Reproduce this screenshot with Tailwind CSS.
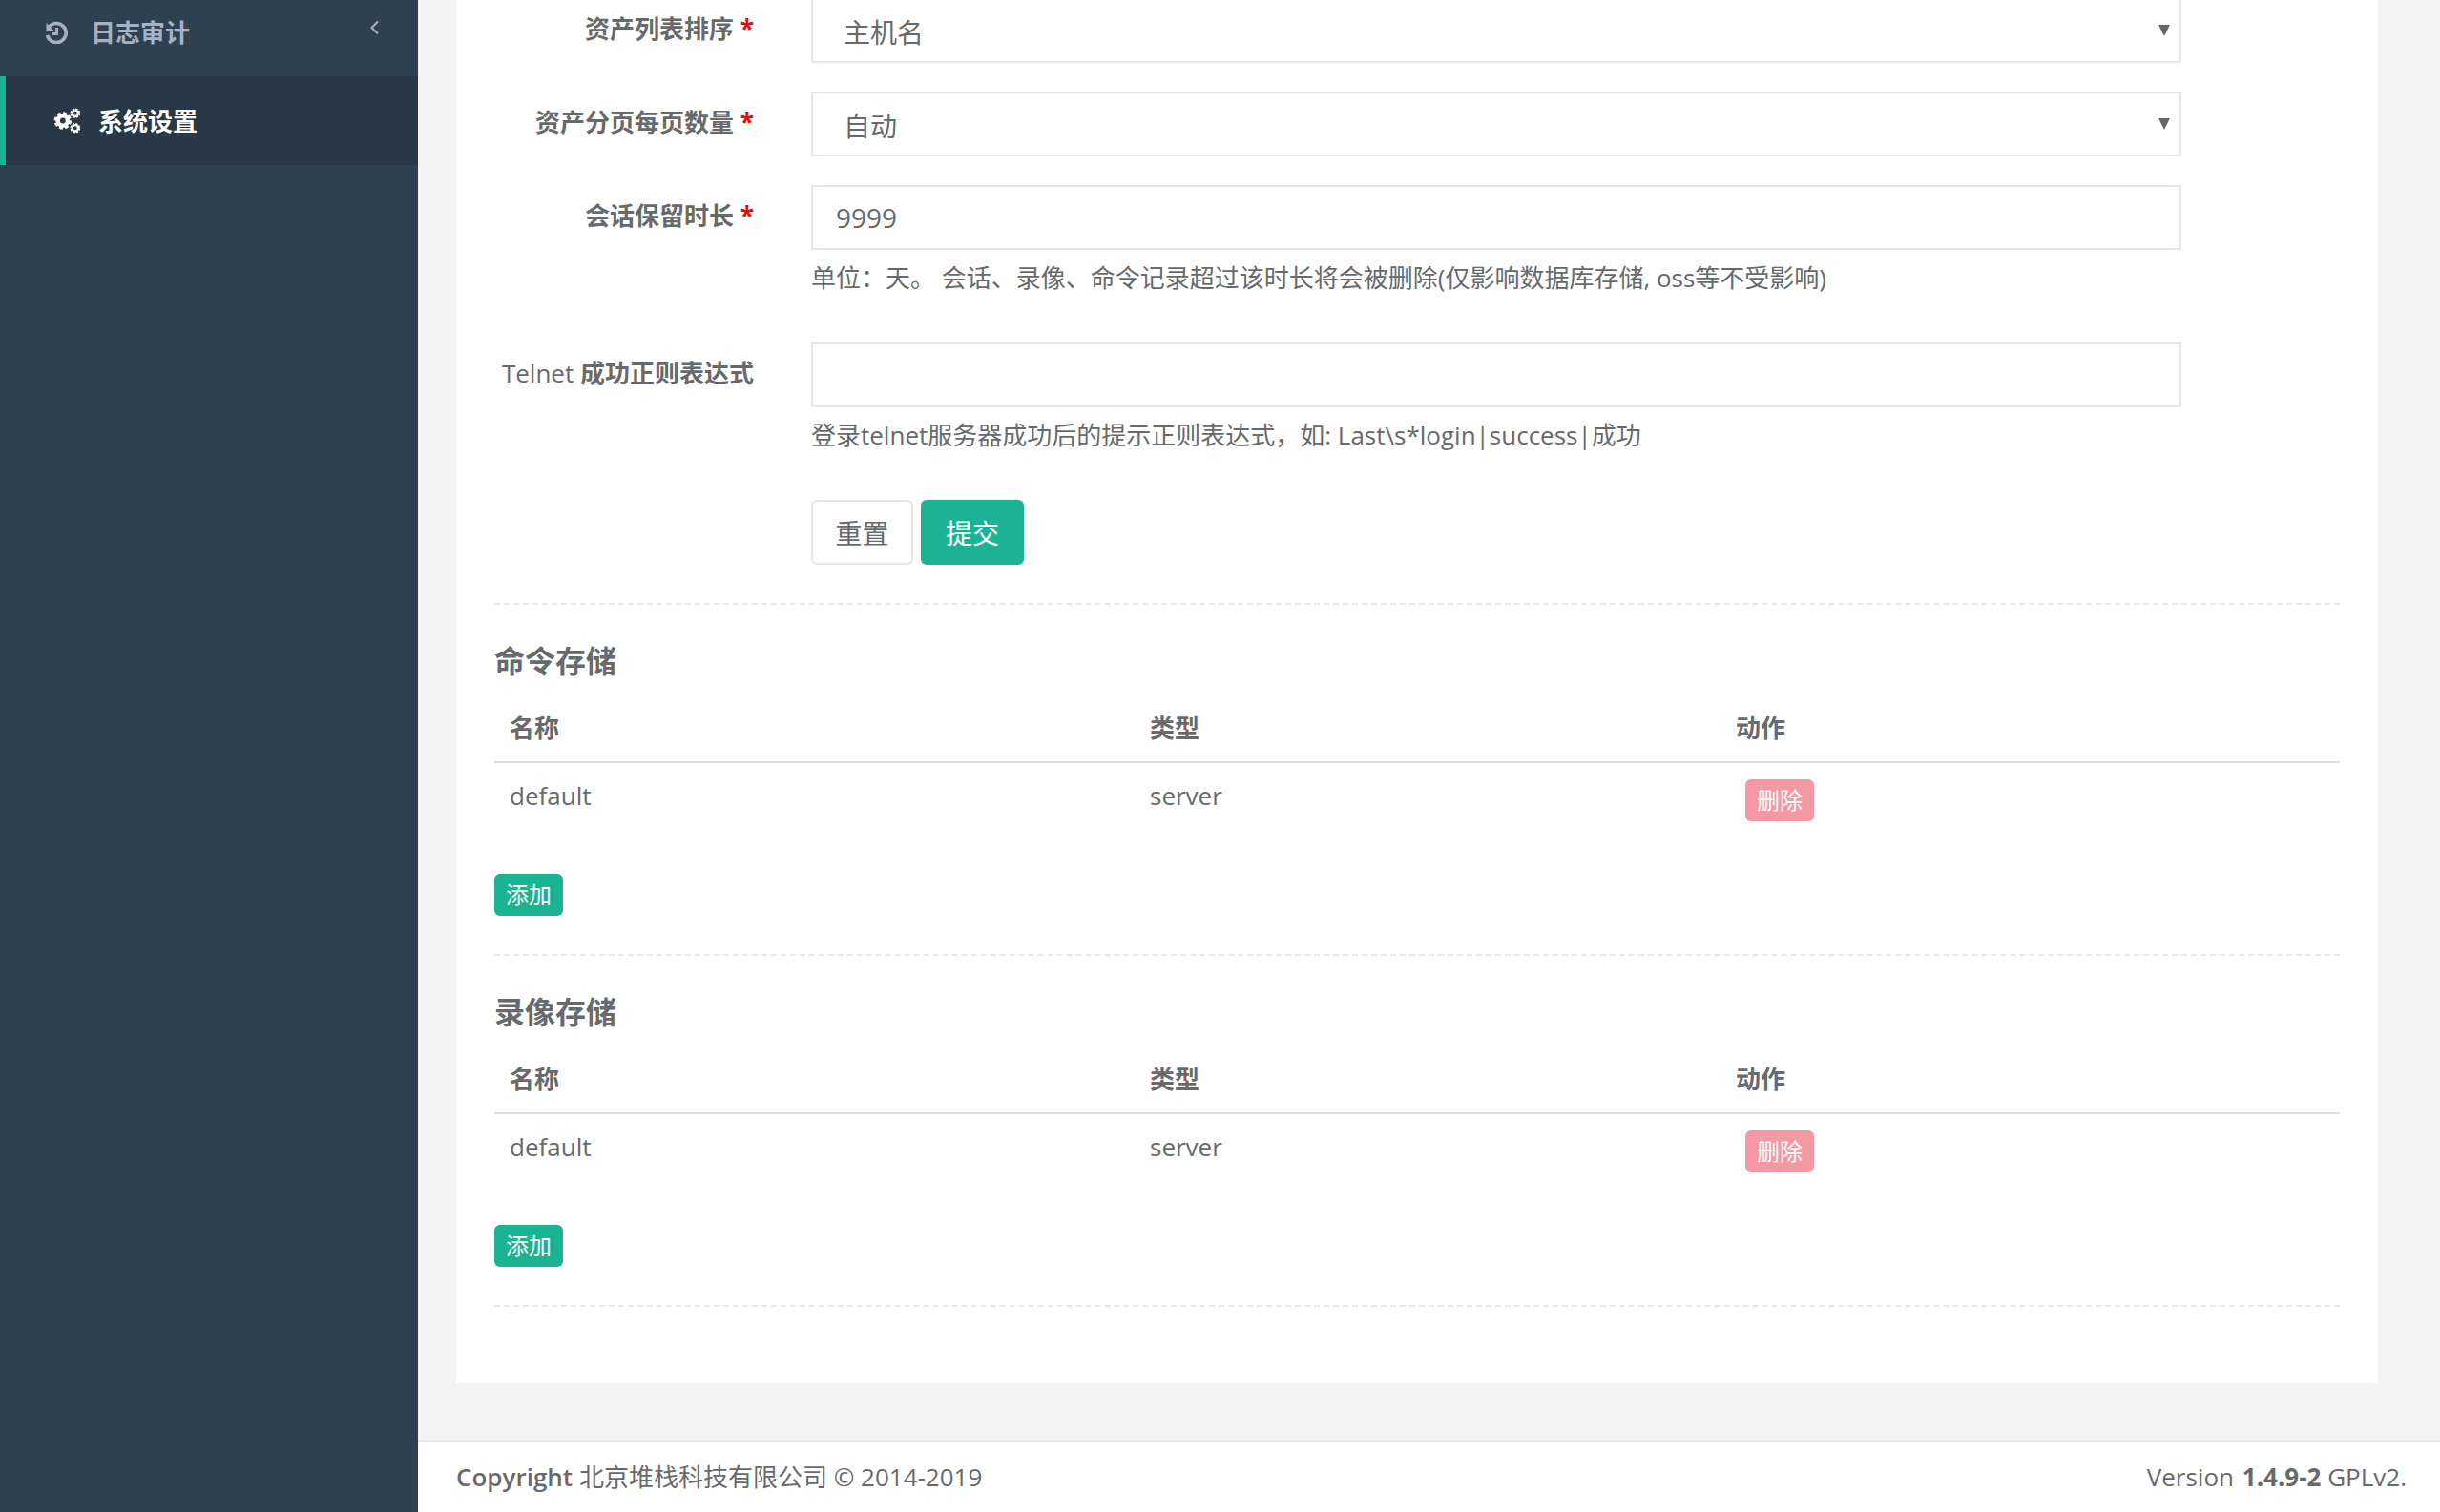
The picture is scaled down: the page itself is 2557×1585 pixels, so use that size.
<!DOCTYPE html>
<html lang="zh-CN">
<head>
  <meta charset="UTF-8" />
  <title>系统设置</title>
  <script src="https://cdn.jsdelivr.net/npm/@tailwindcss/browser@4"></script>
</head>
<body class="bg-[#f3f3f4] text-[#676a6c] font-['Open_Sans','Noto_Sans_CJK_SC',sans-serif] text-[26px]">
  <div class="flex h-screen overflow-hidden">

    <!-- Sidebar -->
    <aside class="w-[438px] shrink-0 bg-[#2f4050] font-bold">
      <div class="h-[80px] pl-[47px] pr-[40px] flex items-start text-[#a7b1c2]">
        <svg class="w-[24px] h-[24px] mt-[22px] shrink-0" viewBox="0 0 24 24" fill="none" stroke="currentColor" stroke-width="3.6">
          <path d="M5 5.5A10 10 0 1 1 2.5 15" />
          <path d="M1.5 2v8.5H10z" fill="currentColor" stroke="none" />
          <path d="M12.5 7v6.5H8" stroke-width="2.8" />
        </svg>
        <span class="ml-[24px] mt-[14px] leading-[40px]">日志审计</span>
        <svg class="w-[11px] h-[16px] mt-[21px] ml-auto" viewBox="0 0 11 16" fill="none" stroke="currentColor" stroke-width="2">
          <path d="M9 1.5 2.5 8 9 14.5" />
        </svg>
      </div>
      <div class="h-[93px] border-l-[6px] border-[#1ab394] bg-[#293846] pl-[50px] flex items-center text-white">
        <svg class="w-[29px] h-[27px] shrink-0" viewBox="0 0 28 26" fill="none" stroke="currentColor">
          <circle cx="9.5" cy="13" r="7.2" stroke-width="3.4" stroke-dasharray="3.4 2.25" />
          <circle cx="9.5" cy="13" r="5" stroke-width="4.4" />
          <circle cx="22" cy="5.5" r="3.9" stroke-width="2.6" stroke-dasharray="2 1.06" />
          <circle cx="22" cy="5.5" r="3" stroke-width="2.2" />
          <circle cx="22" cy="20.5" r="3.9" stroke-width="2.6" stroke-dasharray="2 1.06" />
          <circle cx="22" cy="20.5" r="3" stroke-width="2.2" />
        </svg>
        <span class="ml-[18px] leading-[40px]">系统设置</span>
      </div>
    </aside>

    <!-- Main -->
    <div class="flex-1 min-w-0 flex flex-col">
      <div class="flex-1 min-h-0 pl-[40px] pr-[65px]">
        <main class="h-[1452px] bg-white px-[40px]">

          <!-- Form -->
          <div class="flex items-start -mt-[2px] mb-[30px]">
            <label class="w-[272px] shrink-0 text-right font-bold leading-[40px] pt-[12px]">资产列表排序 <span class="text-[#ff0000]">*</span></label>
            <div class="ml-[60px] w-[1436px] relative">
              <select class="w-full h-[68px] appearance-none bg-white border-2 border-[#e5e6e7] pl-[32px] pt-[3px] text-[28px] outline-none">
                <option>主机名</option>
              </select>
              <span class="absolute right-[12px] top-[28px] w-0 h-0 border-x-[6px] border-x-transparent border-t-[12px] border-t-[#666666]"></span>
            </div>
          </div>

          <div class="flex items-start mb-[30px]">
            <label class="w-[272px] shrink-0 text-right font-bold leading-[40px] pt-[12px]">资产分页每页数量 <span class="text-[#ff0000]">*</span></label>
            <div class="ml-[60px] w-[1436px] relative">
              <select class="w-full h-[68px] appearance-none bg-white border-2 border-[#e5e6e7] pl-[32px] pt-[3px] text-[28px] outline-none">
                <option>自动</option>
              </select>
              <span class="absolute right-[12px] top-[28px] w-0 h-0 border-x-[6px] border-x-transparent border-t-[12px] border-t-[#666666]"></span>
            </div>
          </div>

          <div class="flex items-start mb-[50px]">
            <label class="w-[272px] shrink-0 text-right font-bold leading-[40px] pt-[12px]">会话保留时长 <span class="text-[#ff0000]">*</span></label>
            <div class="ml-[60px] w-[1436px]">
              <input type="text" value="9999" class="w-full h-[68px] border-2 border-[#e5e6e7] px-[24px] text-[28px] outline-none" />
              <p class="mt-[9px] h-[38px] leading-[40px]">单位：天。 会话、录像、命令记录超过该时长将会被删除(仅影响数据库存储, oss等不受影响)</p>
            </div>
          </div>

          <div class="flex items-start">
            <label class="w-[272px] shrink-0 text-right font-bold leading-[40px] pt-[12px]"><span class="font-medium">Telnet</span> 成功正则表达式</label>
            <div class="ml-[60px] w-[1436px]">
              <input type="text" class="w-full h-[68px] border-2 border-[#e5e6e7] px-[24px] text-[28px] outline-none" />
              <p class="mt-[9px] h-[38px] leading-[40px]">登录telnet服务器成功后的提示正则表达式，如: Last\s*login|success|成功</p>
              <div class="mt-[50px] flex gap-[8px]">
                <button class="w-[107px] h-[68px] pt-[2px] bg-white border-2 border-[#e5e6e7] rounded-[6px] text-[28px]">重置</button>
                <button class="w-[108px] h-[68px] pt-[2px] bg-[#1ab394] rounded-[6px] text-[28px] text-white">提交</button>
              </div>
            </div>
          </div>

          <!-- Command storage -->
          <section class="mt-[40px] border-t-2 border-dashed border-[#e7eaec]">
            <h3 class="mt-[29px] h-[60px] leading-[60px] text-[32px] font-bold">命令存储</h3>
            <table class="w-full table-fixed">
              <thead>
                <tr class="border-b-2 border-[#dddddd]">
                  <th class="w-[671px] h-[76px] pt-[5px] pl-[16px] text-left font-bold">名称</th>
                  <th class="w-[614px] h-[76px] pt-[5px] pl-[16px] text-left font-bold">类型</th>
                  <th class="h-[76px] pt-[5px] pl-[16px] text-left font-bold">动作</th>
                </tr>
              </thead>
              <tbody>
                <tr>
                  <td class="h-[77px] pl-[16px] pt-[14px] align-top leading-[40px]">default</td>
                  <td class="h-[77px] pl-[16px] pt-[14px] align-top leading-[40px]">server</td>
                  <td class="h-[77px] pl-[26px] pt-[17px] align-top">
                    <button class="block w-[72px] h-[44px] bg-[#ed5565]/60 rounded-[6px] text-[24px] text-white">删除</button>
                  </td>
                </tr>
              </tbody>
            </table>
            <button class="block mt-[40px] w-[72px] h-[44px] bg-[#1ab394] rounded-[6px] text-[24px] text-white">添加</button>
          </section>

          <!-- Replay storage -->
          <section class="mt-[40px] border-t-2 border-dashed border-[#e7eaec]">
            <h3 class="mt-[29px] h-[60px] leading-[60px] text-[32px] font-bold">录像存储</h3>
            <table class="w-full table-fixed">
              <thead>
                <tr class="border-b-2 border-[#dddddd]">
                  <th class="w-[671px] h-[76px] pt-[5px] pl-[16px] text-left font-bold">名称</th>
                  <th class="w-[614px] h-[76px] pt-[5px] pl-[16px] text-left font-bold">类型</th>
                  <th class="h-[76px] pt-[5px] pl-[16px] text-left font-bold">动作</th>
                </tr>
              </thead>
              <tbody>
                <tr>
                  <td class="h-[77px] pl-[16px] pt-[14px] align-top leading-[40px]">default</td>
                  <td class="h-[77px] pl-[16px] pt-[14px] align-top leading-[40px]">server</td>
                  <td class="h-[77px] pl-[26px] pt-[17px] align-top">
                    <button class="block w-[72px] h-[44px] bg-[#ed5565]/60 rounded-[6px] text-[24px] text-white">删除</button>
                  </td>
                </tr>
              </tbody>
            </table>
            <button class="block mt-[40px] w-[72px] h-[44px] bg-[#1ab394] rounded-[6px] text-[24px] text-white">添加</button>
          </section>

          <div class="mt-[40px] border-t-2 border-dashed border-[#e7eaec]"></div>
        </main>
      </div>

      <!-- Footer -->
      <footer class="h-[75px] shrink-0 bg-white border-t-2 border-[#e7eaec] pl-[40px] pr-[35px] flex items-center justify-between">
        <div><span class="font-semibold">Copyright</span> 北京堆栈科技有限公司 © 2014-2019</div>
        <div>Version <span class="font-bold ml-[2px]">1.4.9-2</span> GPLv2.</div>
      </footer>
    </div>
  </div>
</body>
</html>
